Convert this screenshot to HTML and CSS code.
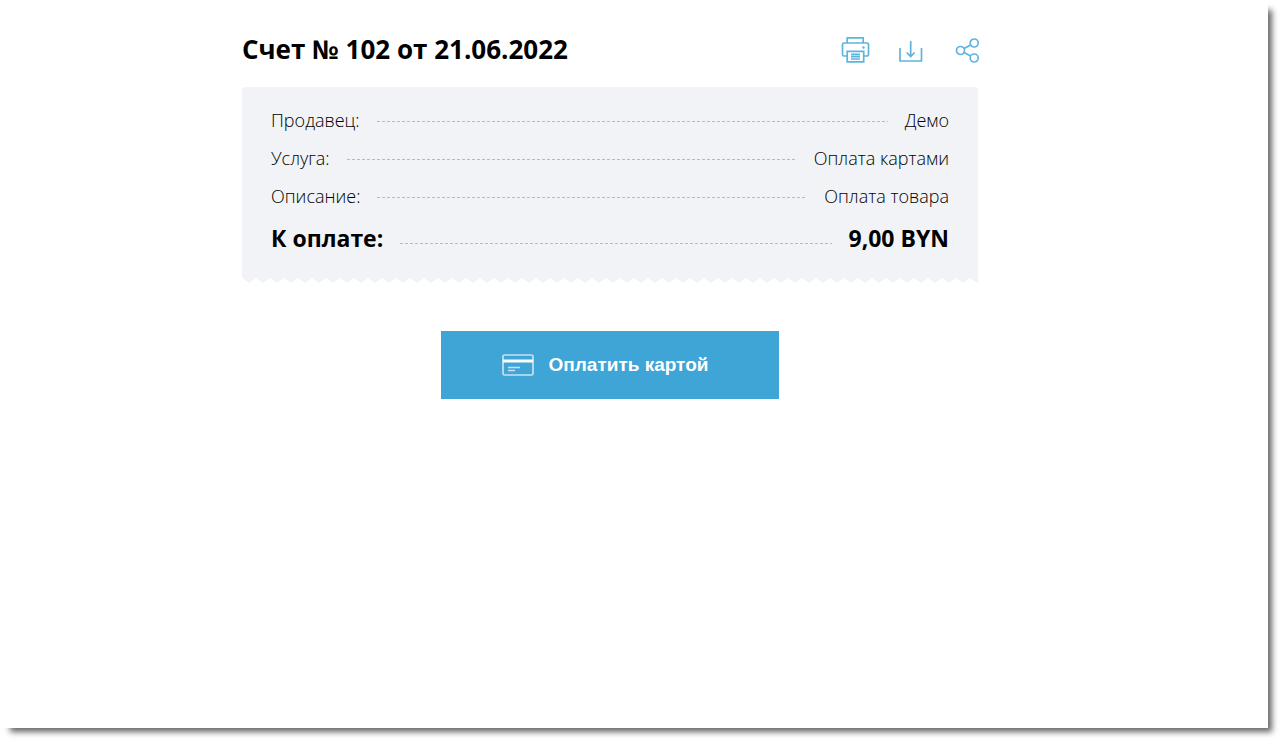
FILE: index.html
```html
<!DOCTYPE html>
<html lang="ru">
<head>
<meta charset="utf-8">
<title>Счет № 102</title>
<meta name="viewport" content="width=device-width, initial-scale=1">
<link rel="stylesheet" href="styles.css">
</head>
<body>
<div class="page">
  <main class="invoice">
    <header class="invoice-header">
      <h1 class="invoice-title">Счет № 102 от 21.06.2022</h1>
      <div class="actions">
        <button class="action" type="button" aria-label="Печать">
          <svg width="28" height="28" viewBox="0 0 28 28" aria-hidden="true">
            <path d="M5.200 7V1.800h16V7M5 20H2a1.500 1.500 0 0 1-1.500-1.500v-10A1.500 1.500 0 0 1 2 7h23A1.500 1.500 0 0 1 26.500 8.500v10a1.500 1.500 0 0 1-1.500 1.500H22M5.200 15.300h16.500v10.500H5.200zM9 18.300h9M9 20.700h9M9 23h9"/>
            <circle class="dot" cx="21.500" cy="11.500" r="1.200"/>
          </svg>
        </button>
        <button class="action" type="button" aria-label="Скачать">
          <svg width="28" height="28" viewBox="0 0 28 28" aria-hidden="true">
            <path d="M2 12v13h21.500V12M12.700 5v15.500M8.700 16.500l4 4 4-4"/>
          </svg>
        </button>
        <button class="action" type="button" aria-label="Поделиться">
          <svg width="28" height="28" viewBox="0 0 28 28" aria-hidden="true">
            <circle cx="6.500" cy="14.500" r="4"/><circle cx="20.200" cy="7" r="4"/><circle cx="20.200" cy="22" r="4"/>
            <path d="M10 12.600l6.700-3.700M10 16.400l6.700 3.700"/>
          </svg>
        </button>
      </div>
    </header>
    <section class="receipt">
      <dl class="rows">
        <div class="row"><dt>Продавец:</dt><dd>Демо</dd></div>
        <div class="row"><dt>Услуга:</dt><dd>Оплата картами</dd></div>
        <div class="row"><dt>Описание:</dt><dd>Оплата товара</dd></div>
        <div class="row total"><dt>К оплате:</dt><dd>9,00 BYN</dd></div>
      </dl>
      <svg class="teeth" width="100%" height="6" aria-hidden="true">
        <defs><pattern id="tooth" width="14" height="6" patternUnits="userSpaceOnUse"><path d="M0 0h14L7 5z"/></pattern></defs>
        <rect width="100%" height="6" fill="url(#tooth)"/>
      </svg>
    </section>
    <button class="pay" type="button">
      <svg width="32" height="22" viewBox="0 0 32 22" aria-hidden="true">
        <rect class="card" x="1" y="1" width="30" height="20" rx="1.500"/>
        <path class="stripe" d="M1 7h30"/>
        <path class="lines" d="M6 13.500h12M6 16.500h7"/>
      </svg>
      <span>Оплатить картой</span>
    </button>
  </main>
</div>
</body>
</html>
```
FILE: styles.css
```css
* {
  box-sizing: border-box;
}

body {
  margin: 0;
  padding: 0 15px 15px 0;
  background: #fff;
  color: #000;
  font-family: "Open Sans", "Noto Sans", sans-serif;
}

.page {
  min-height: calc(100vh - 15px);
  padding: 31px 64px 32px 16px;
  background: #fff;
  box-shadow: 7px 7px 6px -3px rgba(0, 0, 0, 0.6);
}

.invoice {
  display: flex;
  flex-direction: column;
  max-width: 736px;
  margin: 0 auto;
}

.invoice-header {
  display: flex;
  align-items: center;
  justify-content: space-between;
  margin-bottom: 20px;
}

.invoice-title {
  margin: 0;
  font-size: 26px;
  line-height: 36px;
  font-weight: 700;
}

.actions {
  display: flex;
  gap: 28px;
  margin-right: -4px;
  padding-top: 1px;
}

.action {
  display: flex;
  padding: 0;
  border: 0;
  background: none;
  cursor: pointer;
}

.action svg {
  fill: none;
  overflow: visible;
  stroke: #5fb4de;
  stroke-width: 1.7;
}

.action .dot {
  fill: #5fb4de;
  stroke: none;
}

.rows {
  margin: 0;
  padding: 14px 29px 17px;
  border-radius: 4px 4px 0 0;
  background: #f1f3f7;
}

.row {
  display: flex;
  align-items: center;
  gap: 17px;
  font-size: 18px;
  line-height: 38px;
  font-weight: 300;
}

.row dd {
  order: 1;
  margin: 0;
}

.row::after {
  content: "";
  flex: 1;
  height: 1px;
  margin-top: 2px;
  background: repeating-linear-gradient(90deg, #b9babd 0 3px, transparent 3px 5px);
}

.total {
  font-size: 23px;
  line-height: 46px;
  font-weight: 700;
}

.total::after {
  margin-top: 11px;
}

.teeth {
  display: block;
  fill: #f1f3f7;
}

.pay {
  display: flex;
  align-items: center;
  justify-content: center;
  gap: 15px;
  width: 338px;
  max-width: 100%;
  height: 68px;
  margin: 47px auto 0;
  padding: 0 42px 0 32px;
  border: 0;
  background: #3fa4d6;
  color: #fff;
  font-family: "Liberation Sans", Arial, sans-serif;
  font-size: 19px;
  font-weight: 700;
  cursor: pointer;
}

.pay svg {
  fill: none;
  stroke: #c5e3f2;
}

.card {
  stroke-width: 1.7;
}

.pay .stripe {
  stroke: #fff;
  stroke-width: 3;
}

.lines {
  stroke-width: 1.5;
}
```
